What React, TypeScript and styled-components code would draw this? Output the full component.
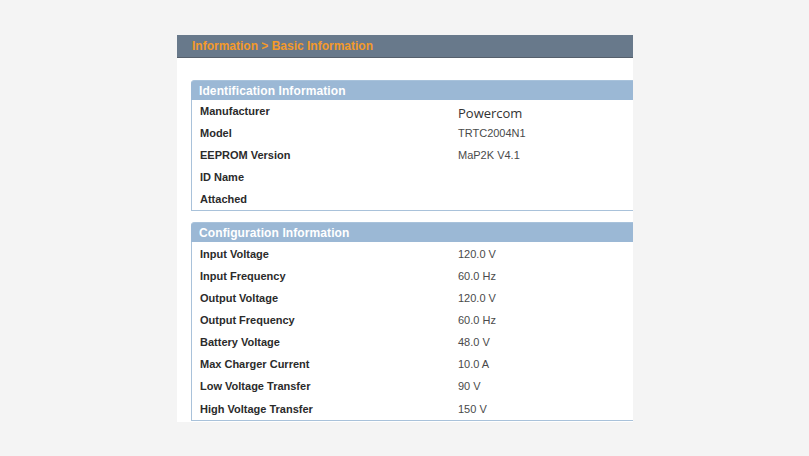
import React from "react";
import styled, { createGlobalStyle } from "styled-components";

const Global = createGlobalStyle`
  html, body { margin: 0; padding: 0; background: #f4f4f4; }
  body { font-family: "Liberation Sans", Arial, sans-serif; }
`;

const Page = styled.div`
  padding: 35px 0 0 177px;
  min-height: 456px;
  box-sizing: border-box;
`;

const Panel = styled.div`
  width: 456px;
  background: #ffffff;
  overflow: hidden;
  padding-bottom: 1px;
`;

const TopBar = styled.div`
  height: 22px;
  background: #68798b;
  border-bottom: 1px solid #56606c;
  display: flex;
  align-items: center;
  padding-left: 15px;
  color: #f49a2a;
  font-weight: bold;
  font-size: 12px;
`;

const Content = styled.div`
  padding: 22px 0 0 14px;
  display: flex;
  flex-direction: column;
  gap: 11px;
`;

const Box = styled.div`
  width: 470px;
  border: 1px solid #a9c2da;
  border-top: none;
  border-radius: 4px 0 0 0;
  background: #fff;
`;

const BoxHeader = styled.div`
  height: 20px;
  margin: 0 -1px;
  background: #9bb8d5;
  border-top: 1px solid #a8c2db;
  box-sizing: border-box;
  border-radius: 4px 0 0 0;
  display: flex;
  align-items: center;
  padding-left: 8px;
  color: #ffffff;
  font-weight: bold;
  font-size: 12px;
  letter-spacing: 0.1px;
`;

const Rows = styled.div<{ $padTop?: number }>`
  padding-top: ${(p) => p.$padTop ?? 0}px;
`;

const Row = styled.div<{ $shift?: boolean }>`
  height: 22px;
  display: flex;
  align-items: center;
  padding-left: 8px;
  margin-top: ${(p) => (p.$shift ? "1px" : "0")};
`;

const Label = styled.div`
  width: 258px;
  font-size: 11px;
  font-weight: bold;
  color: #2b2b2b;
`;

const Value = styled.div<{ $big?: boolean }>`
  font-size: ${(p) => (p.$big ? "13px" : "11px")};
  font-family: ${(p) =>
    p.$big ? '"Open Sans", "Noto Sans", sans-serif' : '"Liberation Sans", Arial, sans-serif'};
  color: ${(p) => (p.$big ? "#333" : "#4a4a4a")};
  padding-top: ${(p) => (p.$big ? "3px" : "0")};
`;

const ident: [string, string, boolean?][] = [
  ["Manufacturer", "Powercom", true],
  ["Model", "TRTC2004N1"],
  ["EEPROM Version", "MaP2K V4.1"],
  ["ID Name", ""],
  ["Attached", ""],
];

const config: [string, string, boolean?][] = [
  ["Input Voltage", "120.0 V"],
  ["Input Frequency", "60.0 Hz"],
  ["Output Voltage", "120.0 V"],
  ["Output Frequency", "60.0 Hz"],
  ["Battery Voltage", "48.0 V"],
  ["Max Charger Current", "10.0 A"],
  ["Low Voltage Transfer", "90 V"],
  ["High Voltage Transfer", "150 V", true],
];

export default function App() {
  return (
    <>
      <Global />
      <Page>
        <Panel>
          <TopBar>Information &gt; Basic Information</TopBar>
          <Content>
            <Box>
              <BoxHeader>Identification Information</BoxHeader>
              <Rows>
                {ident.map(([l, v, big]) => (
                  <Row key={l}>
                    <Label>{l}</Label>
                    <Value $big={big}>{v}</Value>
                  </Row>
                ))}
              </Rows>
            </Box>
            <Box>
              <BoxHeader>Configuration Information</BoxHeader>
              <Rows $padTop={1}>
                {config.map(([l, v, shift]) => (
                  <Row key={l} $shift={shift}>
                    <Label>{l}</Label>
                    <Value>{v}</Value>
                  </Row>
                ))}
              </Rows>
            </Box>
          </Content>
        </Panel>
      </Page>
    </>
  );
}
